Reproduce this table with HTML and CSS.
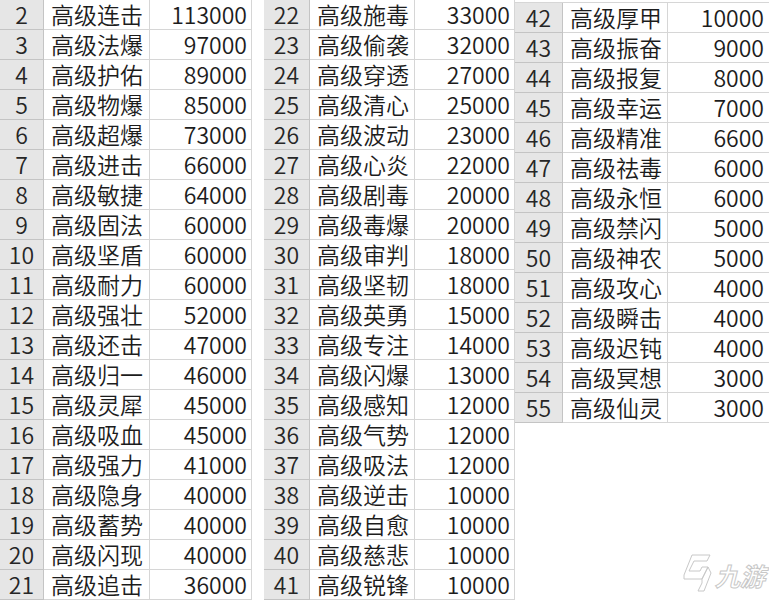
FILE: index.html
```html
<!DOCTYPE html>
<html lang="zh">
<head>
<meta charset="utf-8">
<title>高级技能</title>
<link rel="stylesheet" href="styles.css">
</head>
<body>
<div class="sheet">
  <div class="grp g1">
    <div class="rn">2</div><div class="nm">高级连击</div><div class="vl">113000</div>
    <div class="rn">3</div><div class="nm">高级法爆</div><div class="vl">97000</div>
    <div class="rn">4</div><div class="nm">高级护佑</div><div class="vl">89000</div>
    <div class="rn">5</div><div class="nm">高级物爆</div><div class="vl">85000</div>
    <div class="rn">6</div><div class="nm">高级超爆</div><div class="vl">73000</div>
    <div class="rn">7</div><div class="nm">高级进击</div><div class="vl">66000</div>
    <div class="rn">8</div><div class="nm">高级敏捷</div><div class="vl">64000</div>
    <div class="rn">9</div><div class="nm">高级固法</div><div class="vl">60000</div>
    <div class="rn">10</div><div class="nm">高级坚盾</div><div class="vl">60000</div>
    <div class="rn">11</div><div class="nm">高级耐力</div><div class="vl">60000</div>
    <div class="rn">12</div><div class="nm">高级强壮</div><div class="vl">52000</div>
    <div class="rn">13</div><div class="nm">高级还击</div><div class="vl">47000</div>
    <div class="rn">14</div><div class="nm">高级归一</div><div class="vl">46000</div>
    <div class="rn">15</div><div class="nm">高级灵犀</div><div class="vl">45000</div>
    <div class="rn">16</div><div class="nm">高级吸血</div><div class="vl">45000</div>
    <div class="rn">17</div><div class="nm">高级强力</div><div class="vl">41000</div>
    <div class="rn">18</div><div class="nm">高级隐身</div><div class="vl">40000</div>
    <div class="rn">19</div><div class="nm">高级蓄势</div><div class="vl">40000</div>
    <div class="rn">20</div><div class="nm">高级闪现</div><div class="vl">40000</div>
    <div class="rn">21</div><div class="nm">高级追击</div><div class="vl">36000</div>
  </div>
  <div class="gap"></div>
  <div class="grp g2">
    <div class="rn">22</div><div class="nm">高级施毒</div><div class="vl">33000</div>
    <div class="rn">23</div><div class="nm">高级偷袭</div><div class="vl">32000</div>
    <div class="rn">24</div><div class="nm">高级穿透</div><div class="vl">27000</div>
    <div class="rn">25</div><div class="nm">高级清心</div><div class="vl">25000</div>
    <div class="rn">26</div><div class="nm">高级波动</div><div class="vl">23000</div>
    <div class="rn">27</div><div class="nm">高级心炎</div><div class="vl">22000</div>
    <div class="rn">28</div><div class="nm">高级剧毒</div><div class="vl">20000</div>
    <div class="rn">29</div><div class="nm">高级毒爆</div><div class="vl">20000</div>
    <div class="rn">30</div><div class="nm">高级审判</div><div class="vl">18000</div>
    <div class="rn">31</div><div class="nm">高级坚韧</div><div class="vl">18000</div>
    <div class="rn">32</div><div class="nm">高级英勇</div><div class="vl">15000</div>
    <div class="rn">33</div><div class="nm">高级专注</div><div class="vl">14000</div>
    <div class="rn">34</div><div class="nm">高级闪爆</div><div class="vl">13000</div>
    <div class="rn">35</div><div class="nm">高级感知</div><div class="vl">12000</div>
    <div class="rn">36</div><div class="nm">高级气势</div><div class="vl">12000</div>
    <div class="rn">37</div><div class="nm">高级吸法</div><div class="vl">12000</div>
    <div class="rn">38</div><div class="nm">高级逆击</div><div class="vl">10000</div>
    <div class="rn">39</div><div class="nm">高级自愈</div><div class="vl">10000</div>
    <div class="rn">40</div><div class="nm">高级慈悲</div><div class="vl">10000</div>
    <div class="rn">41</div><div class="nm">高级锐锋</div><div class="vl">10000</div>
  </div>
  <div class="grp g3">
    <div class="rn">42</div><div class="nm">高级厚甲</div><div class="vl">10000</div>
    <div class="rn">43</div><div class="nm">高级振奋</div><div class="vl">9000</div>
    <div class="rn">44</div><div class="nm">高级报复</div><div class="vl">8000</div>
    <div class="rn">45</div><div class="nm">高级幸运</div><div class="vl">7000</div>
    <div class="rn">46</div><div class="nm">高级精准</div><div class="vl">6600</div>
    <div class="rn">47</div><div class="nm">高级祛毒</div><div class="vl">6000</div>
    <div class="rn">48</div><div class="nm">高级永恒</div><div class="vl">6000</div>
    <div class="rn">49</div><div class="nm">高级禁闪</div><div class="vl">5000</div>
    <div class="rn">50</div><div class="nm">高级神农</div><div class="vl">5000</div>
    <div class="rn">51</div><div class="nm">高级攻心</div><div class="vl">4000</div>
    <div class="rn">52</div><div class="nm">高级瞬击</div><div class="vl">4000</div>
    <div class="rn">53</div><div class="nm">高级迟钝</div><div class="vl">4000</div>
    <div class="rn">54</div><div class="nm">高级冥想</div><div class="vl">3000</div>
    <div class="rn">55</div><div class="nm">高级仙灵</div><div class="vl">3000</div>
  </div>
</div>
<div class="mark">
  <svg class="mark-logo" width="34" height="40" viewBox="0 0 34 40">
    <path d="M12 2 L30 2 L27 8 L14 8 L9 18 L20 18 L22 14 L28 14 L22 26 L4 26 L4 22 Z" fill="none" stroke="#c8c8c8" stroke-width="1"/>
    <path d="M22 26 L28 14 L31 20 L24 38 L18 38 L22 30 Z" fill="none" stroke="#c8c8c8" stroke-width="1"/>
  </svg>
  <span class="mark-text">九游</span>
</div>
</body>
</html>
```
FILE: styles.css
```css
html, body {
  margin: 0;
  padding: 0;
  background: #ffffff;
}
body {
  width: 769px;
  height: 600px;
  overflow: hidden;
  position: relative;
  font-family: "Noto Sans CJK SC", "Noto Sans", sans-serif;
  color: #1c1c1c;
}
.sheet {
  display: flex;
  align-items: flex-start;
}
.grp {
  display: grid;
  grid-auto-rows: 30px;
  font-size: 23px;
  font-weight: 350;
  line-height: 29px;
}
.g1 { grid-template-columns: 44px 106px 102px; }
.gap { width: 12px; flex: none; }
.g2 { grid-template-columns: 46px 105px 100px; }
.g3 {
  grid-template-columns: 48px 105px 103px;
  margin-top: 2px;
  border-top: 1px solid #d6d6d6;
}
.rn, .nm, .vl {
  box-sizing: border-box;
  border-bottom: 1px solid #d6d6d6;
  border-right: 1px solid #d6d6d6;
  white-space: nowrap;
}
.rn {
  background: #e6e6e6;
  border-color: #c4c4c4;
  text-align: center;
  color: #262626;
}
.nm {
  padding-left: 7px;
}
.vl {
  text-align: right;
  padding-right: 4px;
}
.g3 .vl { padding-right: 7px; border-right: none; }
.mark {
  position: absolute;
  left: 680px;
  top: 553px;
  display: flex;
  align-items: flex-end;
  gap: 1px;
}
.mark-logo { display: block; }
.mark-text {
  font-family: "Noto Sans CJK SC", sans-serif;
  font-size: 25px;
  font-style: italic;
  font-weight: 700;
  line-height: 28px;
  color: #ffffff;
  -webkit-text-stroke: 1px #c8c8c8;
  margin-bottom: 4px;
}
```
